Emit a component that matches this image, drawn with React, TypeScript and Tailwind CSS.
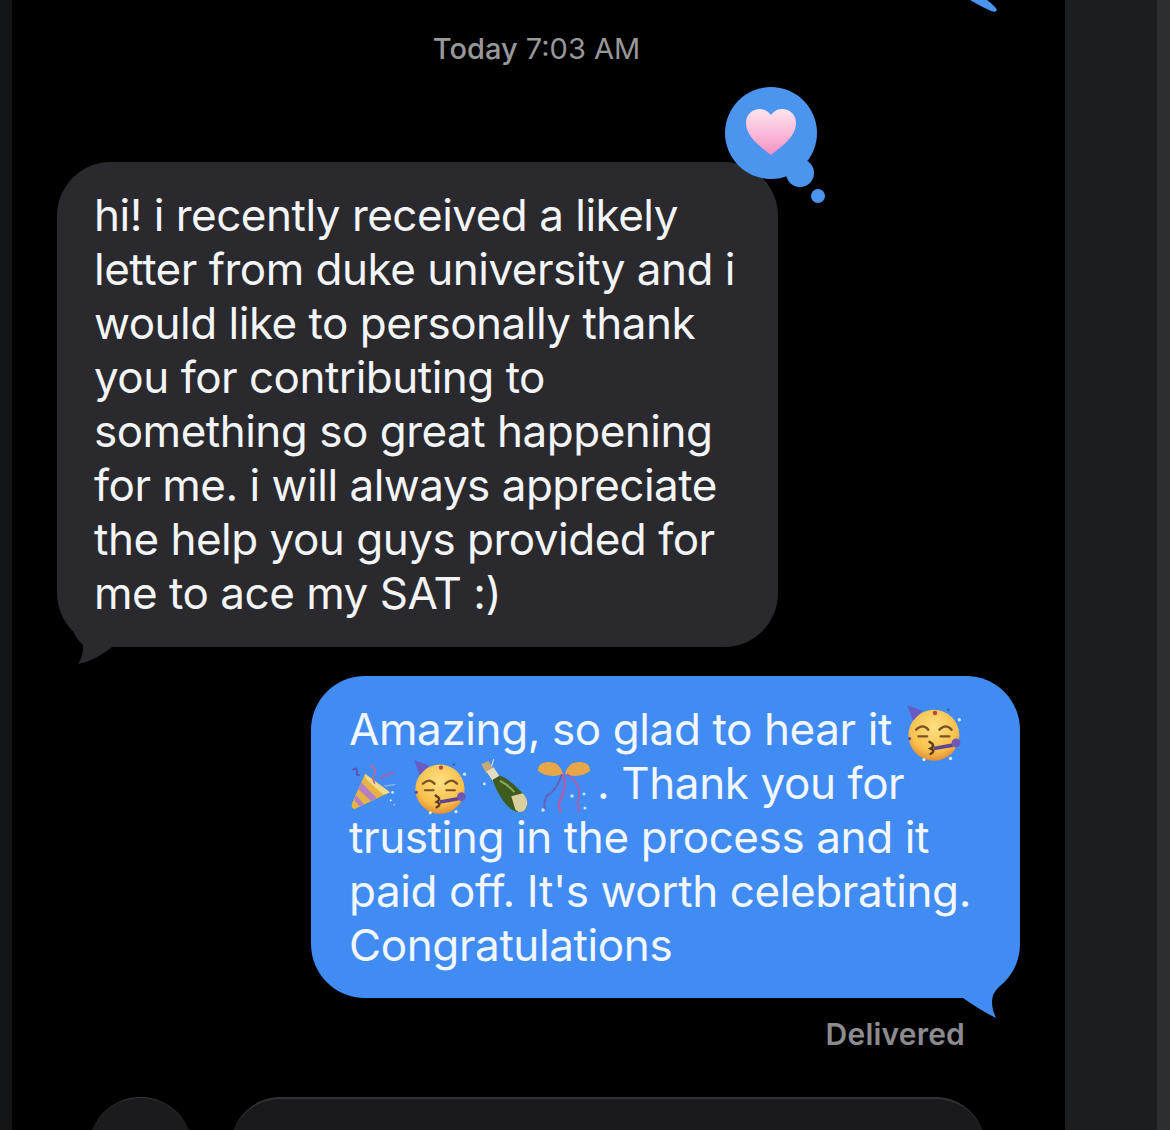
const PartyPopper = () => (
  <svg viewBox="0 0 54 54" className="inline-block w-[48px] h-[54px] -my-[6px] align-middle">
    <path d="M18 12 L46 33 L6 52 Q1 50 4 44 Z" fill="#e6b443" />
    <path d="M14 22 L31 39 L25 43 L10 29 Z" fill="#b47fc4" />
    <path d="M8 36 L17 47 L12 49 L6 42 Z" fill="#b47fc4" />
    <path d="M18 12 L46 33 L39 36 L19 18 Z" fill="#f6da85" />
    <path d="M24 3 Q32 6 28 14 Q26 18 29 23" fill="none" stroke="#c0659c" strokeWidth="2" />
    <path d="M36 18 Q40 10 43 15 Q47 8 51 12" fill="none" stroke="#a35fb0" strokeWidth="2" />
    <path d="M4 8 Q9 3 9 10 Q7 15 12 13" fill="none" stroke="#5a52b8" strokeWidth="2" />
    <path d="M40 26 L52 24" stroke="#8fb8ea" strokeWidth="1.5" />
    <circle cx="49" cy="33" r="1.6" fill="#cfe9f7" />
    <circle cx="47" cy="42" r="1.2" fill="#cfe9f7" />
    <circle cx="51" cy="47" r="1.2" fill="#c9a0d8" />
  </svg>
);

const PartyFace = ({ id, big }: { id: string; big?: boolean }) => (
  <svg
    viewBox="0 0 56 54"
    className={
      big
        ? "inline-block w-[62px] h-[60px] -my-[9px] align-middle"
        : "inline-block w-[60px] h-[58px] -my-[8px] align-middle"
    }
  >
    <defs>
      <radialGradient id={id} cx="50%" cy="35%" r="65%">
        <stop offset="0%" stopColor="#fde082" />
        <stop offset="72%" stopColor="#f8c04c" />
        <stop offset="100%" stopColor="#e38f36" />
      </radialGradient>
    </defs>
    <circle cx="27" cy="29" r="23" fill={`url(#${id})`} />
    <path d="M3 2 L17 7 L8 16 Z" fill="#6a5bc4" />
    <path d="M11 24 Q17 18 22 24 M32 24 Q38 18 43 24" fill="none" stroke="#7a5226" strokeWidth="2.2" strokeLinecap="round" />
    <path d="M13 30 H21 M33 30 H41" stroke="#7a5226" strokeWidth="2" strokeLinecap="round" />
    <path d="M23 35 Q29 38 24 41 Q29 43 24 46" fill="none" stroke="#5e3b1c" strokeWidth="2.2" strokeLinecap="round" />
    <path d="M27 41 L44 38" stroke="#5f458f" strokeWidth="3.4" />
    <circle cx="47" cy="36" r="4" fill="#6f57b4" />
    <circle cx="28" cy="9" r="2" fill="#b5473f" />
    <circle cx="50" cy="15" r="1.5" fill="#cfe9f7" />
    <circle cx="40" cy="6" r="1.4" fill="#3f62b8" />
    <circle cx="5" cy="32" r="1.5" fill="#5a52b8" />
    <circle cx="18" cy="51" r="1.5" fill="#e3e6c8" />
    <circle cx="42" cy="50" r="1.5" fill="#cfe9f7" />
  </svg>
);

const Bottle = () => (
  <svg viewBox="0 0 54 54" className="inline-block w-[56px] h-[56px] -my-[7px] align-middle">
    <path d="M6 5 L13 2 L18 10 L11 14 Z" fill="#c9a878" />
    <path d="M11 12 L18 8 L24 17 L17 21 Z" fill="#e3dcc0" />
    <path d="M17 20 L24 16 Q34 20 44 31 Q52 39 50 45 Q48 52 42 51 Q34 50 27 40 Q20 30 17 20 Z" fill="#3e5c1d" />
    <path d="M35 36 L46 33 Q52 39 50 45 Q48 52 42 51 L39 49 Z" fill="#dccf9e" />
    <path d="M24 21 Q32 25 38 32" fill="none" stroke="#8ba65a" strokeWidth="2" />
    <circle cx="9" cy="24" r="1.4" fill="#cfe9f7" />
    <path d="M18 0 L16 7" stroke="#d9e6f2" strokeWidth="1" />
  </svg>
);

const Bow = () => (
  <svg viewBox="0 0 54 54" className="inline-block w-[54px] h-[54px] -my-[6px] align-middle">
    <path d="M26 14 Q23 1 10 2 Q0 4 1 11 Q12 19 26 14 Z" fill="#e8a64a" />
    <path d="M28 14 Q31 1 44 2 Q54 4 53 11 Q42 19 28 14 Z" fill="#e8a64a" />
    <path d="M25 14 Q20 30 10 36 Q6 42 8 50" fill="none" stroke="#6c5bb0" strokeWidth="1.8" />
    <path d="M26 14 Q30 28 24 38 Q20 46 24 52" fill="none" stroke="#b45ca8" strokeWidth="2.4" />
    <path d="M30 14 Q44 24 42 36 Q40 44 42 52" fill="none" stroke="#b45ca8" strokeWidth="1.8" />
    <circle cx="35" cy="36" r="1.8" fill="#bfe3f5" />
    <circle cx="6" cy="50" r="1.8" fill="#bfe3f5" />
    <circle cx="47" cy="34" r="1.5" fill="#bfe3f5" />
    <circle cx="48" cy="48" r="1.5" fill="#bfe3f5" />
  </svg>
);

const ThoughtHeart = () => (
  <svg viewBox="0 0 110 125" className="absolute left-[668px] top-[-75px] w-[110px] h-[125px]">
    <defs>
      <linearGradient id="heart" x1="0" y1="0" x2="0" y2="1">
        <stop offset="0%" stopColor="#fde4ee" />
        <stop offset="55%" stopColor="#fbb8d8" />
        <stop offset="100%" stopColor="#f58fc0" />
      </linearGradient>
    </defs>
    <circle cx="46" cy="46" r="46" fill="#4b95ef" />
    <circle cx="75" cy="86" r="14" fill="#4b95ef" />
    <circle cx="93" cy="109" r="7" fill="#4b95ef" />
    <path d="M46 68 C36 60 21 50 21 36 C21 26 29 22 35 22 C40 22 44 25 46 28 C48 25 52 22 57 22 C63 22 71 26 71 36 C71 50 56 60 46 68 Z" fill="url(#heart)" />
  </svg>
);

const App = () => {
  return (
    <div className="w-[1170px] h-[1130px] overflow-hidden flex bg-black font-['Inter',sans-serif]">
      <div className="w-[12px] shrink-0 bg-[#131415]" />

      <main className="relative w-[1053px] shrink-0 bg-black flex flex-col">
        {/* tail of the previous message */}
        <svg viewBox="0 0 30 14" className="absolute left-[958px] top-0 w-[30px] h-[14px]">
          <path d="M0 0 L17 0 Q25 6 27 10 Q26 13 21 11 Q10 6 0 0 Z" fill="#4b95ef" />
        </svg>

        <div className="h-[162px] shrink-0 pt-[30px] pr-[4px] text-center text-[29px] leading-[38px] text-[#98989b]">
          <span className="font-medium">Today</span> 7:03 AM
        </div>

        <div className="relative shrink-0 ml-[45px] w-[721px] h-[485px] rounded-[54px] bg-[#2a2a2e] pl-[37px] py-[26px] text-[44px] leading-[54px] tracking-[-0.5px] text-[#f3f4f6]">
          hi! i recently received a likely
          <br />
          letter from duke university and i
          <br />
          would like to personally thank
          <br />
          you for contributing to
          <br />
          something so great happening
          <br />
          for me. i will always appreciate
          <br />
          the help you guys provided for
          <br />
          me to ace my SAT :)
          <ThoughtHeart />
          <svg viewBox="0 0 60 70" className="absolute left-0 bottom-[-18px] w-[60px] h-[70px]">
            <path d="M16 36 Q20 45 26 50 Q27 60 21 69 Q38 66 55 52 L55 30 Z" fill="#2a2a2e" />
          </svg>
        </div>

        <div className="relative shrink-0 mt-[29px] ml-[299px] w-[709px] h-[322px] rounded-[54px] bg-[#418cf2] pl-[38px] py-[26px] text-[44px] leading-[54px] tracking-[-0.4px] text-[#f2f7fd]">
          Amazing, so glad to hear it <PartyFace id="face-a" big />
          <br />
          <PartyPopper />
          <span className="inline-block w-[14px]" />
          <PartyFace id="face-b" />
          <span className="inline-block w-[4px]" />
          <Bottle />
          <span className="inline-block w-[6px]" />
          <Bow />
          <span className="inline-block w-[6px]" />. Thank you for
          <br />
          trusting in the process and it
          <br />
          paid off. It's worth celebrating.
          <br />
          Congratulations
          <svg viewBox="0 0 70 70" className="absolute right-0 bottom-[-22px] w-[70px] h-[70px]">
            <path d="M10 40 L10 48 L13 48 Q30 60 46 68 Q40 56 43 45 Q46 40 52 33 Z" fill="#418cf2" />
          </svg>
        </div>

        <div className="shrink-0 mt-[17px] mr-[100px] text-right text-[30px] leading-[38px] font-semibold tracking-[0.2px] text-[#8c8c8f]">
          Delivered
        </div>

        <div className="shrink-0 mt-[44px] ml-[77px] flex gap-[39px]">
          <div className="w-[103px] h-[103px] shrink-0 rounded-full bg-[#1b1b1d] border-t border-[#3a3a3c]" />
          <div className="w-[754px] h-[99px] rounded-[50px] bg-[#1a1a1c] border-t-2 border-[#333335]" />
        </div>
      </main>

      <div className="w-[92px] shrink-0 bg-[#1c1d1f]" />
      <div className="flex-1 bg-[#2c2e30]" />
    </div>
  );
};

export default App;
